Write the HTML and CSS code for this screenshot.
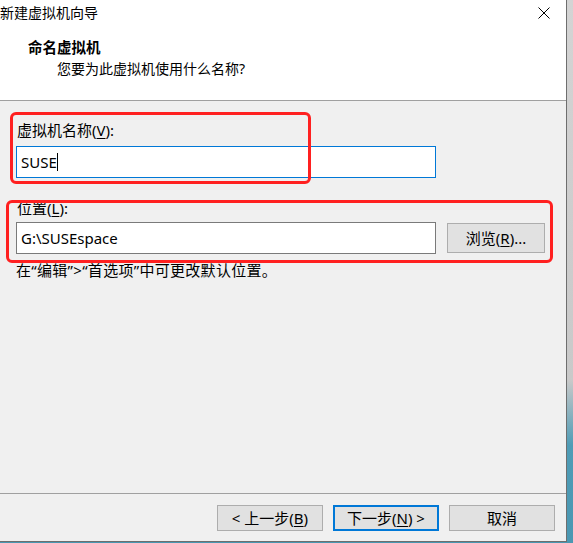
FILE: index.html
```html
<!DOCTYPE html>
<html lang="zh-CN">
<head>
<meta charset="utf-8">
<title>新建虚拟机向导</title>
<link rel="stylesheet" href="styles.css">
</head>
<body>
<div class="window">
  <div class="titlebar">
    <span class="title">新建虚拟机向导</span>
    <span class="close">
      <svg width="12" height="12" viewBox="0 0 12 12"><path d="M0.5 0.5 L11.5 11.5 M11.5 0.5 L0.5 11.5" stroke="#000" stroke-width="1" fill="none"/></svg>
    </span>
  </div>
  <div class="header">
    <div class="heading">命名虚拟机</div>
    <div class="subtitle">您要为此虚拟机使用什么名称?</div>
  </div>
  <div class="content">
    <div class="label">虚拟机名称(<u>V</u>):</div>
    <div class="input focused"><span class="val">SUSE</span><span class="caret"></span></div>
    <div class="label label-loc">位置(<u>L</u>):</div>
    <div class="row">
      <div class="input"><span class="val">G:\SUSEspace</span></div>
      <div class="btn browse">浏览(<u>R</u>)...</div>
    </div>
    <div class="hint">在“编辑”&gt;“首选项”中可更改默认位置。</div>
    <div class="mark mark1"></div>
    <div class="mark mark2"></div>
  </div>
  <div class="footer">
    <div class="btn">&lt; 上一步(<u>B</u>)</div>
    <div class="btn default">下一步(<u>N</u>) &gt;</div>
    <div class="btn">取消</div>
  </div>
</div>
</body>
</html>
```

FILE: styles.css
```css
html, body {
  margin: 0;
  padding: 0;
}
body {
  width: 573px;
  height: 543px;
  overflow: hidden;
  background: linear-gradient(to bottom, #d4d4d4 0%, #c9c9c9 70%, #4f9cb6 82%, #4a97b2 100%);
  font-family: "Noto Sans", "Noto Sans CJK SC", sans-serif;
  font-size: 15px;
  color: #000;
}
.window {
  width: 566px;
  height: 541px;
  background: #f0f0f0;
  border-right: 1px solid #6e6e6e;
  border-bottom: 1px solid #6e6e6e;
  display: flex;
  flex-direction: column;
}
.titlebar {
  height: 26px;
  background: #fff;
  display: flex;
  align-items: center;
  justify-content: space-between;
}
.title {
  font-size: 14px;
  line-height: 20px;
  color: #000;
}
.close {
  width: 46px;
  display: flex;
  justify-content: center;
  margin-right: -1px;
}
.close svg { display: block; }
.header {
  background: #fff;
  border-bottom: 1px solid #a0a0a0;
  box-sizing: border-box;
  height: 75px;
  padding-top: 11px;
}
.heading {
  padding-left: 28px;
  font-weight: bold;
  line-height: 20px;
  font-size: 14.5px;
}
.subtitle {
  padding-left: 57px;
  margin-top: 2px;
  line-height: 20px;
  font-size: 14px;
}
.content {
  position: relative;
  flex: 1;
  padding: 19px 0 0 16px;
}
.label {
  line-height: 20px;
  padding-left: 1px;
}
.label-loc {
  margin-top: 20px;
}
.input {
  box-sizing: border-box;
  width: 420px;
  height: 32px;
  background: #fff;
  border: 1px solid #7a7a7a;
  display: flex;
  align-items: center;
  padding-left: 4px;
  margin-top: 6px;
}
.input.focused {
  border-color: #0078d7;
}
.val {
  line-height: 20px;
}
.caret {
  display: inline-block;
  width: 1px;
  height: 18px;
  background: #000;
}
.row {
  display: flex;
  align-items: center;
  gap: 11px;
  margin-top: 4px;
}
.row .input { margin-top: 0; }
.btn {
  box-sizing: border-box;
  width: 106px;
  height: 26px;
  background: #e1e1e1;
  border: 1px solid #adadad;
  display: flex;
  align-items: center;
  justify-content: center;
  line-height: 20px;
}
.btn.browse {
  width: 98px;
  height: 30px;
}
.btn.default {
  border: 2px solid #0078d7;
}
.hint {
  margin-top: 6px;
  line-height: 20px;
  letter-spacing: 0.3px;
}
.mark {
  position: absolute;
  border: 3px solid #ff2020;
  border-radius: 6px;
  box-sizing: border-box;
}
.mark1 {
  left: 10px;
  top: 11px;
  width: 301px;
  height: 72px;
}
.mark2 {
  left: 6px;
  top: 99px;
  width: 547px;
  height: 63px;
}
.footer {
  border-top: 1px solid #a0a0a0;
  height: 48px;
  display: flex;
  justify-content: flex-end;
  align-items: flex-start;
  gap: 10px;
  padding: 11px 11px 0 0;
  box-sizing: border-box;
}
u {
  text-decoration: underline;
  text-underline-offset: 2px;
}
```
